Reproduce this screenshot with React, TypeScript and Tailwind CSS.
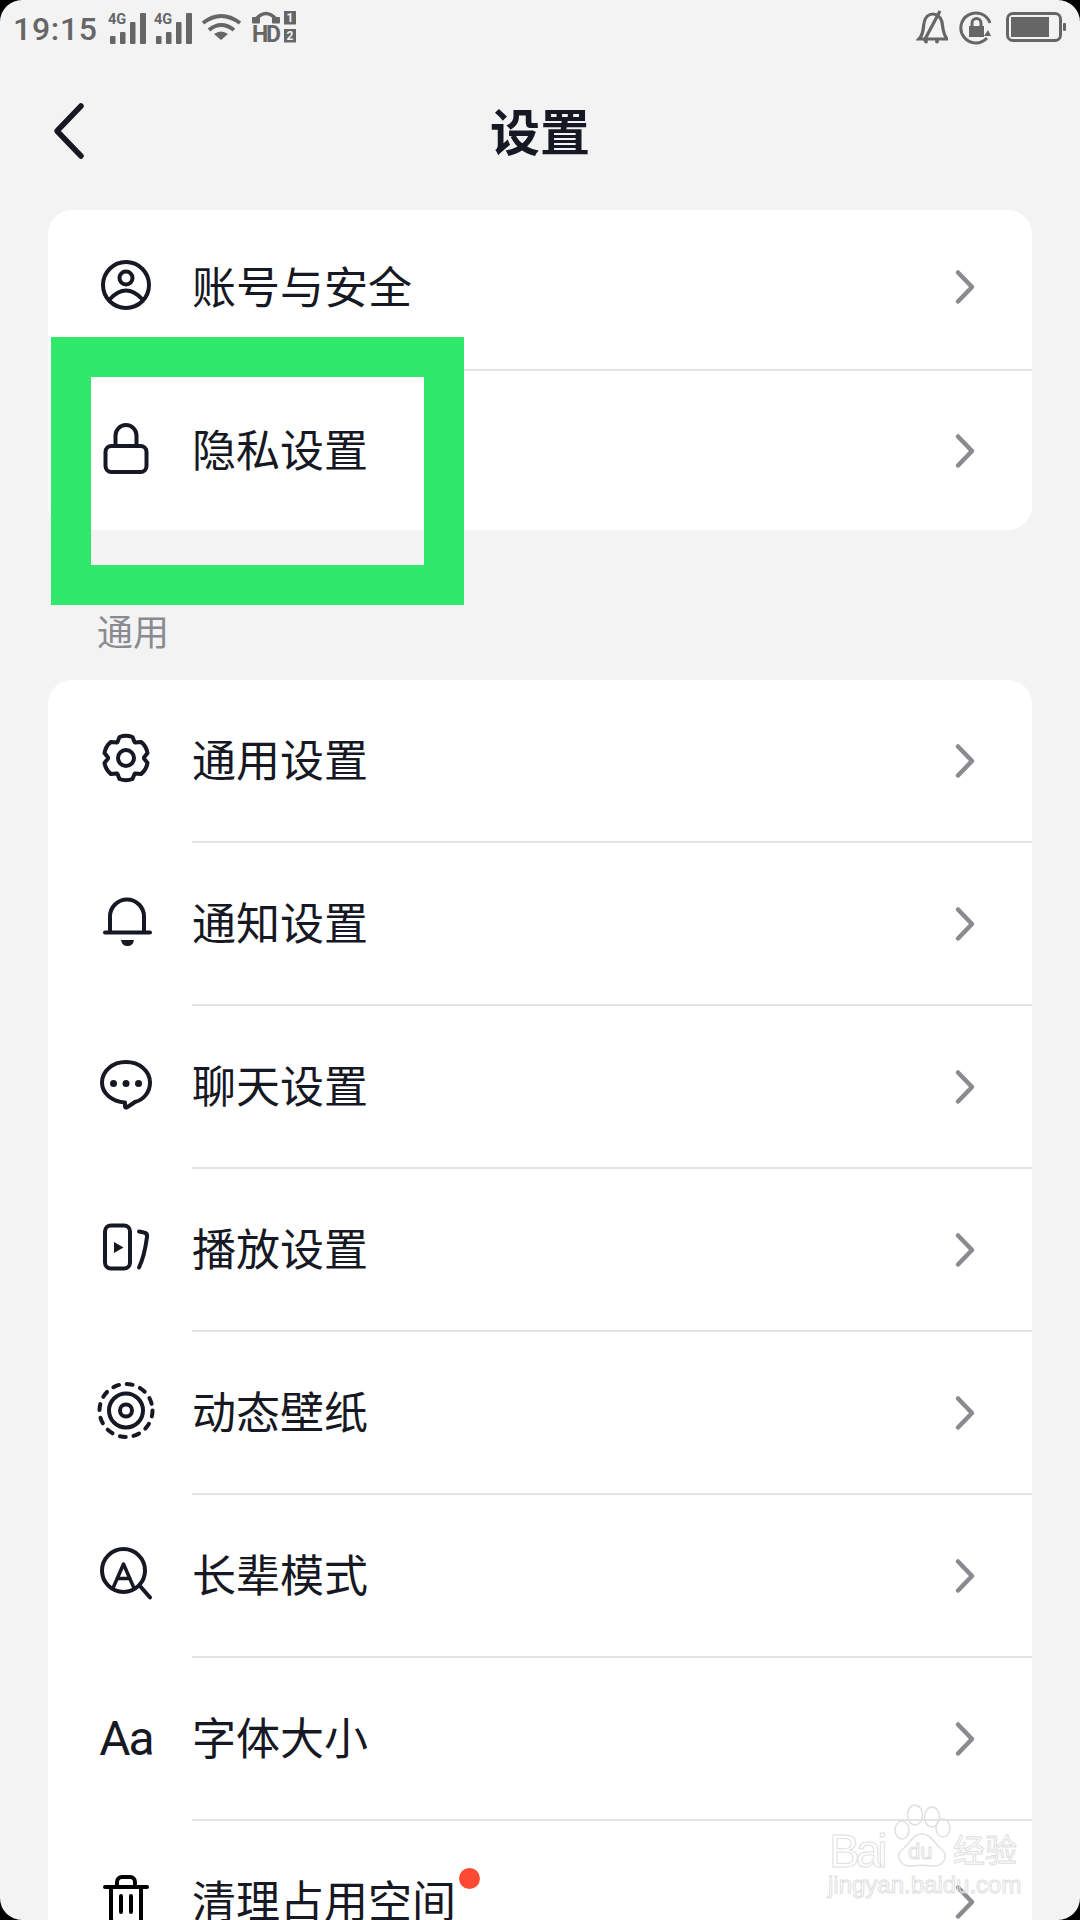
import type { ReactNode } from "react";

const ink = "#161823";

// six lobed gear outline, stroked in the 56 box
const gearPath = (cx: number, cy: number) => {
  const parts: string[] = [];
  for (let i = 0; i < 6; i++) {
    const a = (-90 + i * 60) * (Math.PI / 180);
    const s = 0.3;
    const p = (r: number, d: number) =>
      `${(cx + r * Math.cos(a + d)).toFixed(1)} ${(cy + r * Math.sin(a + d)).toFixed(1)}`;
    parts.push(`${i === 0 ? "M" : "L"}${p(18, -0.5)}`, `L${p(22, -s)}`, `Q${p(23.5, 0)} ${p(22, s)}`, `L${p(18, 0.5)}`);
  }
  return parts.join(" ") + "Z";
};

function Icon({ children }: { children: ReactNode }) {
  return (
    <svg width="56" height="56" viewBox="0 0 56 56" fill="none" stroke={ink} strokeWidth="4" strokeLinecap="round" strokeLinejoin="round" className="overflow-visible">
      {children}
    </svg>
  );
}

const icons: Record<string, ReactNode> = {
  account: (
    <Icon>
      <circle cx="28" cy="26" r="23" />
      <circle cx="28" cy="19" r="6.5" />
      <path d="M12 40Q28 23 44 40" />
    </Icon>
  ),
  lock: (
    <Icon>
      <rect x="7.5" y="23" width="41" height="26" rx="6" />
      <path d="M17.5 22V12.5a10.5 10.5 0 0 1 21 0V22" />
    </Icon>
  ),
  gear: (
    <Icon>
      <path d={gearPath(28, 25)} />
      <circle cx="28" cy="25" r="8" />
    </Icon>
  ),
  bell: (
    <Icon>
      <path d="M12 36V20.5a17 17 0 0 1 34 0V36" />
      <path d="M7 36.5H52" />
      <path d="M23 44H36Q35 50 29.5 50Q24 50 23 44Z" fill={ink} stroke="none" />
    </Icon>
  ),
  chat: (
    <Icon>
      <path d="M28 3C14.5 3 4 12 4 23.5C4 34.5 14 42.5 27 43.5L27 47.5Q27.5 49.5 29.5 48L37 43C46 40.5 52 33 52 23.5C52 12 41.5 3 28 3Z" />
      <circle cx="15.5" cy="24.5" r="3.5" fill={ink} stroke="none" />
      <circle cx="28" cy="24.5" r="3.5" fill={ink} stroke="none" />
      <circle cx="40.5" cy="24.5" r="3.5" fill={ink} stroke="none" />
    </Icon>
  ),
  play: (
    <Icon>
      <rect x="7" y="3.5" width="25" height="43" rx="6" />
      <path d="M16 20V31L25.5 25.5Z" fill={ink} stroke="none" />
      <path d="M41 9.5L46 10.5Q49.5 11 49 15Q46.5 34 41 45.5" />
    </Icon>
  ),
  wallpaper: (
    <Icon>
      <circle cx="28" cy="25.5" r="26.5" strokeDasharray="6 7.87" />
      <circle cx="28" cy="25.5" r="17" />
      <circle cx="28" cy="25.5" r="6" />
    </Icon>
  ),
  elder: (
    <Icon>
      <circle cx="25.5" cy="22.5" r="21.5" />
      <path d="M15.5 39L25.5 16L35.5 39M19 30.5H32" strokeWidth="3.5" />
      <path d="M42 38L52 49.5" />
    </Icon>
  ),
  trash: (
    <Icon>
      <path d="M7 13H49" stroke="#000" />
      <path d="M19 12V8a5 5 0 0 1 5-5h8a5 5 0 0 1 5 5v4" stroke="#000" />
      <path d="M13 14V52a4 4 0 0 0 4 4H39a4 4 0 0 0 4-4V14" stroke="#000" />
      <path d="M23 22V38M33 22V38" stroke="#000" />
    </Icon>
  ),
};

function Chevron() {
  return (
    <svg width="24" height="36" viewBox="0 0 24 36" fill="none" stroke="#8a8b91" strokeWidth="4.5" strokeLinecap="round" strokeLinejoin="round">
      <path d="M5 3.5L19 18L5 32.5" />
    </svg>
  );
}

function Row({ icon, label, dot, rowClass = "h-[161px]" }: { icon: ReactNode; label: string; dot?: boolean; rowClass?: string }) {
  return (
    <div className={`flex items-center ${rowClass}`}>
      <div className="w-[56px] h-[56px] ml-[50px] shrink-0 flex items-center justify-center">{icon}</div>
      <span className="relative ml-[38px] mb-[5px] text-[44px] leading-[44px] text-[#161823]">
        {label}
        {dot && <span className="absolute right-[-24px] top-[-9px] w-[21px] h-[21px] rounded-full bg-[#fe4a32]" />}
      </span>
      <div className="ml-auto mr-[55px]">
        <Chevron />
      </div>
    </div>
  );
}

function Divider() {
  return <div className="h-[2px] ml-[144px] bg-[#e4e4e4]" />;
}

function Signal() {
  return (
    <svg width="40" height="32" viewBox="0 0 40 32" fill="#666" className="overflow-visible">
      <text x="0" y="11" fontSize="14.5" fontWeight="700" fontFamily="Roboto, sans-serif">4G</text>
      <rect x="2" y="23" width="5.5" height="8" rx="1" />
      <rect x="12" y="19" width="5.5" height="12" rx="1" />
      <rect x="22" y="9" width="5.5" height="22" rx="1" />
      <rect x="32" y="0" width="6" height="31" rx="1" />
    </svg>
  );
}

function StatusBar() {
  return (
    <div className="h-[50px] flex justify-between text-[#666]">
      <div className="flex items-start pl-[13px] pt-[12px]">
        <span className="text-[32px] leading-[34px] font-medium font-['Roboto',sans-serif] tracking-[0.7px]">19:15</span>
        <div className="ml-[10px] mt-[1px]"><Signal /></div>
        <div className="ml-[6px] mt-[1px]"><Signal /></div>
        <svg width="42" height="30" viewBox="0 0 42 30" fill="none" stroke="#666" strokeWidth="4" className="ml-[7px]">
          <path d="M2 11Q20 -3 39 11" />
          <path d="M8 18Q20 8 33 18" />
          <path d="M20 28L13 22Q20 17 27 22Z" fill="#666" stroke="none" />
        </svg>
        <svg width="46" height="32" viewBox="0 0 46 32" fill="#666" className="ml-[8px] mt-[-1px] overflow-visible">
          <path d="M5 8Q15 -3 25 8" fill="none" stroke="#666" strokeWidth="3.5" />
          <rect x="1" y="6" width="8" height="6.5" rx="1" />
          <rect x="21" y="6" width="8" height="6.5" rx="1" />
          <text x="1" y="31" fontSize="23" fontWeight="700" fontFamily="Roboto, sans-serif" textLength="29">HD</text>
          <rect x="33" y="0" width="12" height="13.5" />
          <rect x="33" y="18" width="12" height="13.5" />
          <text x="39" y="11" fontSize="12" fontWeight="700" textAnchor="middle" fill="#f3f3f3" fontFamily="Roboto, sans-serif">1</text>
          <text x="39" y="29" fontSize="12" fontWeight="700" textAnchor="middle" fill="#f3f3f3" fontFamily="Roboto, sans-serif">2</text>
        </svg>
      </div>
      <div className="flex items-start pt-[10px] pr-[14px]">
        <svg width="32" height="34" viewBox="0 0 32 34" fill="none" stroke="#666" strokeWidth="3.2">
          <path d="M3 29C8 24 7 18 8 13C9 7 13 4 17 4C21 4 25 7 26 12C27 19 27 24 31 29Z" />
          <path d="M8 31L24 1" />
          <circle cx="10" cy="31.5" r="2" fill="#666" stroke="none" />
          <circle cx="21" cy="31.5" r="2" fill="#666" stroke="none" />
        </svg>
        <svg width="34" height="34" viewBox="0 0 34 34" fill="none" stroke="#666" strokeWidth="3" className="ml-[11px] mt-[1px]">
          <path d="M28 27A15 15 0 1 1 31 12" />
          <path d="M29 19L32 25L25 25Z" fill="#666" stroke="none" />
          <rect x="10" y="15" width="15" height="11" fill="#666" stroke="none" />
          <path d="M13 16V12a4.5 4.5 0 0 1 9 0v4" />
        </svg>
        <div className="ml-[13px] mt-[2px] flex items-center">
          <div className="w-[56px] h-[30px] rounded-[7px] border-[3px] border-[#666] p-[2px]">
            <div className="w-[38px] h-full bg-[#666]" />
          </div>
          <div className="w-[3px] h-[8px] ml-[1px] bg-[#666] rounded-[1px]" />
        </div>
      </div>
    </div>
  );
}

function Watermark() {
  return (
    <div className="absolute left-[826px] top-[1803px] w-[200px] h-[96px] text-transparent [-webkit-text-stroke:1px_#e0e0e0]">
      <svg width="200" height="70" viewBox="0 0 200 70" fill="none" stroke="#e0e0e0" strokeWidth="1.5" className="absolute left-0 top-0">
        <ellipse cx="89" cy="12" rx="7.5" ry="10" />
        <ellipse cx="106" cy="14" rx="7.5" ry="10" />
        <ellipse cx="117" cy="25" rx="7" ry="9" />
        <ellipse cx="76" cy="27" rx="7" ry="9" />
        <path d="M96 31C87 31 84 40 78 45C68 52 74 64 86 63C92 62 100 62 106 63C118 64 124 52 114 45C108 40 105 31 96 31Z" />
      </svg>
      <span className="absolute left-[3px] top-[25px] text-[46px] leading-[46px] tracking-[-4px] font-['Liberation_Sans',sans-serif]">Bai</span>
      <span className="absolute left-[82px] top-[37px] text-[22px] leading-[24px] font-['Liberation_Sans',sans-serif]">du</span>
      <span className="absolute left-[127px] top-[26px] text-[32px] leading-[38px] font-['Noto_Sans_CJK_SC',sans-serif]">经验</span>
      <span className="absolute left-[2px] top-[68px] text-[24px] leading-[28px] font-['Liberation_Sans',sans-serif]">jingyan.baidu.com</span>
    </div>
  );
}

export default function App() {
  return (
    <div className="relative w-[1080px] h-[1920px] overflow-hidden bg-black font-['Noto_Sans_CJK_SC',sans-serif]">
      <div className="w-full h-full rounded-[22px] bg-[#f3f3f3] overflow-hidden">
        <StatusBar />

        {/* Header */}
        <div className="relative h-[160px] pb-[2px] flex items-center justify-center">
          <svg width="36" height="60" viewBox="0 0 36 60" fill="none" stroke={ink} strokeWidth="5.5" strokeLinecap="round" strokeLinejoin="round" className="absolute left-[51px] top-[51px]">
            <path d="M30 5L6 30L30 55" />
          </svg>
          <h1 className="text-[50px] leading-[60px] font-bold text-[#161823]">设置</h1>
        </div>

        {/* Account card */}
        <div className="mx-[48px] bg-white rounded-[24px] overflow-hidden">
          <Row icon={icons.account} label="账号与安全" rowClass="h-[159px] pb-[5px]" />
          <Divider />
          <Row icon={icons.lock} label="隐私设置" rowClass="h-[159px]" />
        </div>

        <div className="pl-[97px] pt-[82px] pb-[32px] text-[36px] leading-[36px] text-[#8a8b91]">通用</div>

        {/* General card */}
        <div className="mx-[48px] bg-white rounded-t-[24px]">
          <Row icon={icons.gear} label="通用设置" />
          <Divider />
          <Row icon={icons.bell} label="通知设置" />
          <Divider />
          <Row icon={icons.chat} label="聊天设置" />
          <Divider />
          <Row icon={icons.play} label="播放设置" />
          <Divider />
          <Row icon={icons.wallpaper} label="动态壁纸" />
          <Divider />
          <Row icon={icons.elder} label="长辈模式" />
          <Divider />
          <Row
            icon={<span className="text-[48px] leading-[56px] tracking-[-2px] text-[#161823] font-['Roboto',sans-serif]">Aa</span>}
            label="字体大小"
          />
          <Divider />
          <Row icon={icons.trash} label="清理占用空间" dot />
        </div>
      </div>

      {/* Annotation frame drawn over the screenshot */}
      <div className="absolute left-[51px] top-[337px] w-[413px] h-[268px] border-[40px] border-[#30e86a]" />
      <Watermark />
    </div>
  );
}
